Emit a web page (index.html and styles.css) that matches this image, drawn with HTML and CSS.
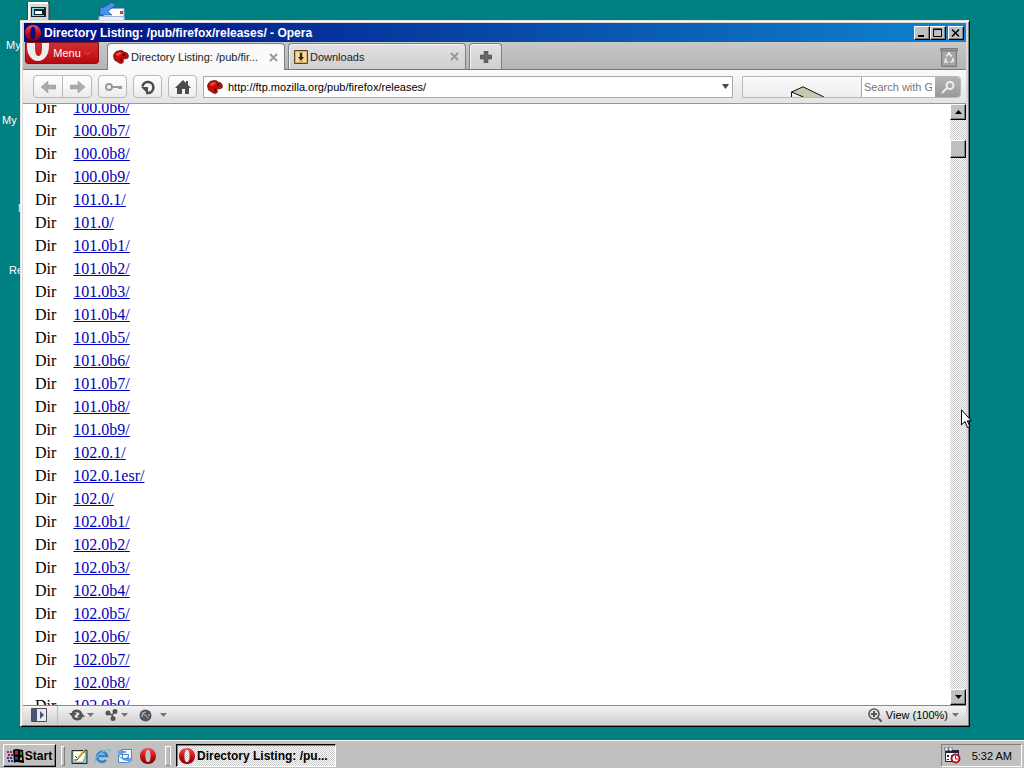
FILE: index.html
```html
<!DOCTYPE html>
<html lang="en">
<head>
    <meta charset="UTF-8">
    <meta name="viewport" content="width=device-width, initial-scale=1.0">
    <title>Directory Listing: /pub/firefox/releases/ - Opera</title>
    <link rel="stylesheet" href="styles.css">
</head>
<body>
    <!-- shared icons -->
    <svg class="defs" width="0" height="0">
        <defs>
            <linearGradient id="red" x1="0" y1="0" x2="0" y2="1">
                <stop offset="0" stop-color="#f0505a"/>
                <stop offset=".5" stop-color="#cc0f16"/>
                <stop offset="1" stop-color="#7c0004"/>
            </linearGradient>
            <symbol id="opera" viewBox="0 0 16 16">
                <path fill="url(#red)" fill-rule="evenodd" d="M8 0c4.600 0 8 3.400 8 8s-3.400 8-8 8-8-3.400-8-8 3.400-8 8-8zm0 1.800C6.200 1.800 5.400 4.500 5.400 8s.8 6.200 2.600 6.200 2.600-2.700 2.600-6.200S9.800 1.800 8 1.800z"/>
            </symbol>
            <symbol id="dino" viewBox="0 0 16 14">
                <path fill="#c00d0d" stroke="#5c0808" stroke-width=".7" d="M1 4l2-2.500L5 1 7 .4l2.500.4L11 2l3 1 1.500 2.500L15 8l-3 1-1-.5-1 1.500.5 2L9 13.500l-3-.5-2-1.500L1.500 10 1 8l-.5-2z"/>
                <path fill="#f04a40" d="M3 4l3-2 3 1-2 2-3 1z"/>
                <path fill="#300" d="M10 4h2v1.500h-2zM7 10l2-2v4z"/>
            </symbol>
        </defs>
    </svg>

    <main class="desktop">
        <svg class="shortcut computer" width="24" height="24" viewBox="0 0 24 24">
            <path fill="#d8d8d0" stroke="#333" d="M1 1.500h21V22H1z"/>
            <path fill="#fff" d="M1 1h20v2H3v18H1z"/>
            <path fill="#123" d="M4 6h15v10H4z"/>
            <path fill="#7fd0e0" d="M5 7h12v8H5z"/>
            <path fill="#123" d="M7 8h10v6H7z"/>
            <path fill="#fff" d="M8 10h7v3H8z"/>
        </svg>
        <svg class="shortcut mail" width="30" height="24" viewBox="0 0 30 24">
            <path fill="#fff" stroke="#8aa8d8" d="M9 6.500h18v14H4z"/>
            <path fill="#e4eefc" stroke="#9ab4dc" d="M2 14.500h25v9H2z"/>
            <path fill="#d04030" d="M23 9h3v3h-3z"/>
            <path fill="#4a90ec" stroke="#1a4ea8" stroke-width=".6" d="M14 .5l5 2-8 7 4 3.500H3V4l3 2z"/>
        </svg>
        <span class="label label-computer">My</span>
        <span class="label label-documents">My</span>
        <span class="label label-network">N</span>
        <span class="label label-recycle">Re</span>

        <section class="window">
            <header class="titlebar">
                <svg width="16" height="16"><use href="#opera"/></svg>
                <h1>Directory Listing: /pub/firefox/releases/ - Opera</h1>
                <div class="controls">
                    <button class="raised" type="button" aria-label="Minimize">
                        <svg width="12" height="10"><path d="M2 7h6v2H2z"/></svg>
                    </button>
                    <button class="raised" type="button" aria-label="Maximize">
                        <svg width="12" height="10"><path fill="none" stroke="#000" d="M1.500 1.500h8v7h-8zM1 1h9"/></svg>
                    </button>
                    <button class="raised close" type="button" aria-label="Close">
                        <svg width="12" height="10"><path fill="none" stroke="#000" stroke-width="1.600" d="M2 1.500l7 7M9 1.500l-7 7"/></svg>
                    </button>
                </div>
            </header>

            <nav class="tabs">
                <button class="menu" type="button">
                    <svg width="24" height="19" viewBox="0 0 24 19">
                        <path fill="#eee" fill-rule="evenodd" d="M1-6h22v9c0 9-5 15-11 15S1 12 1 3zM9-6v10c0 5 .8 9 3.500 9S16 9 16 4V-6z"/>
                    </svg>
                    Menu
                    <svg width="7" height="5"><path fill="none" stroke="#e05860" d="M.5.500l3 3 3-3"/></svg>
                </button>
                <div class="tab active">
                    <svg width="16" height="14"><use href="#dino"/></svg>
                    <a href="#">Directory Listing: /pub/fir...</a>
                    <button type="button" aria-label="Close tab">
                        <svg width="9" height="9"><path d="M1 1l7 7M8 1L1 8"/></svg>
                    </button>
                </div>
                <div class="tab">
                    <svg width="14" height="14">
                        <path fill="#d8b070" stroke="#5a4020" d="M.5.500h13v13H.5z"/>
                        <path fill="#f4dca0" d="M2 2h3v10H2zM9 2h3v10H9z"/>
                        <path fill="#3a2810" d="M6 3h2v4h2L7 10.500 4 7h2z"/>
                    </svg>
                    <a href="#">Downloads</a>
                    <button type="button" aria-label="Close tab">
                        <svg width="9" height="9"><path d="M1 1l7 7M8 1L1 8"/></svg>
                    </button>
                </div>
                <button class="tab new" type="button" aria-label="New tab">
                    <svg width="12" height="12"><path fill="#666" stroke="#444" stroke-width=".5" d="M4 0h4v4h4v4H8v4H4V8H0V4h4z"/></svg>
                </button>
                <button class="trash" type="button" aria-label="Closed tabs">
                    <svg width="18" height="19" viewBox="0 0 18 19">
                        <path fill="#999" stroke="#7b7b7b" d="M.5.500h17v2h-17zM1.500 2.500h15v16h-15z"/>
                        <path fill="#a6a6a6" d="M3 4h12v13H3z"/>
                        <path fill="none" stroke="#eee" stroke-width="1.600" d="M6.500 8.500L9 5l2.500 3.500M12.500 10l1 3-3 1M8 14H5l1-4"/>
                    </svg>
                </button>
            </nav>

            <form class="toolbar">
                <div class="pair">
                    <button type="button" aria-label="Back">
                        <svg width="15" height="12"><path fill="#aaa" stroke="#999" stroke-width=".5" d="M0 6l7-6v4h8v4H7v4z"/></svg>
                    </button>
                    <button type="button" aria-label="Forward">
                        <svg width="15" height="12"><path fill="#aaa" stroke="#999" stroke-width=".5" d="M15 6L8 0v4H0v4h8v4z"/></svg>
                    </button>
                </div>
                <button type="button" aria-label="Wand">
                    <svg width="18" height="10"><path fill="none" stroke="#999" stroke-width="2" d="M8 5a3 3 0 1 0-6 0 3 3 0 1 0 6 0h10"/><path stroke="#999" stroke-width="2" d="M14 6h4"/></svg>
                </button>
                <button type="button" aria-label="Reload">
                    <svg width="18" height="16">
                        <path fill="none" stroke="#4c4c4c" stroke-width="2.600" d="M3.500 7.500A5.500 5.500 0 1 1 9 14H7"/>
                        <path fill="#4c4c4c" d="M2 8h7v7z"/>
                    </svg>
                </button>
                <button type="button" aria-label="Home">
                    <svg width="16" height="14"><path fill="#4c4c4c" d="M8 0l3 3V1h2v4l3 3h-2v6h-4V9H7v5H2V8H0z"/></svg>
                </button>
                <label class="address">
                    <svg width="16" height="14"><use href="#dino"/></svg>
                    <input type="text" aria-label="Address" value="http://ftp.mozilla.org/pub/firefox/releases/">
                    <svg class="drop" width="7" height="5"><path fill="#444" d="M0 0h7L3.500 5z"/></svg>
                </label>
                <div class="search">
                    <svg class="throbber" width="34" height="12" viewBox="0 0 34 12">
                        <path fill="#c8c8b0" d="M1 7l11-5 21 10H10z"/>
                        <path fill="none" stroke="#111" d="M.5 12V7L12 1.800l21 10.200M.5 7l12 5"/>
                    </svg>
                    <input type="text" aria-label="Search" placeholder="Search with Google">
                    <button type="submit" aria-label="Search">
                        <svg width="16" height="14"><path fill="none" stroke="#eee" stroke-width="2" d="M7 8l-5 5M6.500 5.500a3.500 3.500 0 1 0 7 0 3.500 3.500 0 1 0-7 0"/></svg>
                    </button>
                </div>
            </form>

            <div class="view">
                <div class="page">
                    <table>
                        <tbody>
                            <tr><td>Dir</td><td><a href="#">100.0b6/</a></td></tr>
                            <tr><td>Dir</td><td><a href="#">100.0b7/</a></td></tr>
                            <tr><td>Dir</td><td><a href="#">100.0b8/</a></td></tr>
                            <tr><td>Dir</td><td><a href="#">100.0b9/</a></td></tr>
                            <tr><td>Dir</td><td><a href="#">101.0.1/</a></td></tr>
                            <tr><td>Dir</td><td><a href="#">101.0/</a></td></tr>
                            <tr><td>Dir</td><td><a href="#">101.0b1/</a></td></tr>
                            <tr><td>Dir</td><td><a href="#">101.0b2/</a></td></tr>
                            <tr><td>Dir</td><td><a href="#">101.0b3/</a></td></tr>
                            <tr><td>Dir</td><td><a href="#">101.0b4/</a></td></tr>
                            <tr><td>Dir</td><td><a href="#">101.0b5/</a></td></tr>
                            <tr><td>Dir</td><td><a href="#">101.0b6/</a></td></tr>
                            <tr><td>Dir</td><td><a href="#">101.0b7/</a></td></tr>
                            <tr><td>Dir</td><td><a href="#">101.0b8/</a></td></tr>
                            <tr><td>Dir</td><td><a href="#">101.0b9/</a></td></tr>
                            <tr><td>Dir</td><td><a href="#">102.0.1/</a></td></tr>
                            <tr><td>Dir</td><td><a href="#">102.0.1esr/</a></td></tr>
                            <tr><td>Dir</td><td><a href="#">102.0/</a></td></tr>
                            <tr><td>Dir</td><td><a href="#">102.0b1/</a></td></tr>
                            <tr><td>Dir</td><td><a href="#">102.0b2/</a></td></tr>
                            <tr><td>Dir</td><td><a href="#">102.0b3/</a></td></tr>
                            <tr><td>Dir</td><td><a href="#">102.0b4/</a></td></tr>
                            <tr><td>Dir</td><td><a href="#">102.0b5/</a></td></tr>
                            <tr><td>Dir</td><td><a href="#">102.0b6/</a></td></tr>
                            <tr><td>Dir</td><td><a href="#">102.0b7/</a></td></tr>
                            <tr><td>Dir</td><td><a href="#">102.0b8/</a></td></tr>
                            <tr><td>Dir</td><td><a href="#">102.0b9/</a></td></tr>
                        </tbody>
                    </table>
                </div>
                <div class="scrollbar">
                    <button class="raised" type="button" aria-label="Scroll up">
                        <svg width="7" height="4"><path d="M0 4h7L3.500 0z"/></svg>
                    </button>
                    <div class="track"><div class="thumb raised"></div></div>
                    <button class="raised" type="button" aria-label="Scroll down">
                        <svg width="7" height="4"><path d="M0 0h7L3.500 4z"/></svg>
                    </button>
                </div>
            </div>

            <footer class="status">
                <button class="panel" type="button" aria-label="Panels">
                    <svg width="16" height="14">
                        <path fill="#e8eaf0" stroke="#4a4f5c" d="M.5.500h15v13H.5z"/>
                        <path fill="#4a5570" d="M1 1h5v12H1zM9 3l4 4-4 4z"/>
                    </svg>
                </button>
                <button type="button" aria-label="Sync">
                    <svg width="16" height="12">
                        <path fill="none" stroke="#555" stroke-width="2.600" d="M4 5c0-4 6-4 8-1M12 7c0 4-6 4-8 1"/>
                        <path fill="#555" d="M0 4h8L4 9zM8 8h8l-4-5z"/>
                    </svg>
                    <svg class="drop" width="7" height="4"><path d="M0 0h7L3.500 4z"/></svg>
                </button>
                <button type="button" aria-label="Unite">
                    <svg width="14" height="12">
                        <circle cx="3" cy="4" r="2.500" fill="#555"/>
                        <circle cx="10" cy="2.500" r="2.500" fill="#555"/>
                        <circle cx="8" cy="9.500" r="2.500" fill="#555"/>
                        <path fill="none" stroke="#555" stroke-width="1.600" d="M3 4l4 2 1 3M7 6l3-3"/>
                    </svg>
                    <svg class="drop" width="7" height="4"><path d="M0 0h7L3.500 4z"/></svg>
                </button>
                <button class="turbo" type="button" aria-label="Turbo">
                    <svg width="13" height="13">
                        <circle cx="6.500" cy="6.500" r="6" fill="#50555e"/>
                        <path fill="none" stroke="#ccc" d="M3.500 4l6 5M3 8c0-3 1-5 4-5M10 5v2"/>
                    </svg>
                    <svg class="drop" width="7" height="4"><path d="M0 0h7L3.500 4z"/></svg>
                </button>
                <button class="zoom" type="button">
                    <svg width="14" height="14">
                        <circle cx="6" cy="6" r="5" fill="none" stroke="#555" stroke-width="1.600"/>
                        <path fill="none" stroke="#555" stroke-width="2" d="M3 6h6M6 3v6M10 10l4 4"/>
                    </svg>
                    View (100%)
                    <svg class="drop" width="7" height="4"><path d="M0 0h7L3.500 4z"/></svg>
                </button>
            </footer>
        </section>

        <svg class="cursor" width="12" height="20" viewBox="0 0 12 20">
            <path fill="#fff" stroke="#000" d="M.5.800v15l3.500-3.300 2.500 6 2.300-1-2.500-5.700h4z"/>
        </svg>
    </main>

    <footer class="taskbar">
        <button class="start raised" type="button">
            <svg width="17" height="16" viewBox="0 0 17 16">
                <path d="M6 2c4-2 7 0 10 0l1 13c-4 0-7-2-10 0z"/>
                <path fill="#d02030" d="M8 3c1.500-.8 2.500-.4 3 0v4c-1.500-.4-2-.6-3 0z"/>
                <path fill="#208040" d="M13 3.300c1 .2 1.500.2 2 0V7c-1 .3-1.500.2-2 0z"/>
                <path fill="#2040c0" d="M8 9c1.500-.6 2.500-.4 3 0v3c-1.500-.4-2-.6-3 0z"/>
                <path fill="#d8c020" d="M13 9.200c1 .3 1.500.3 2 0V12c-1 .3-1.500.2-2 0z"/>
                <path stroke="#a02050" stroke-width="2" stroke-dasharray="2 1" d="M0 4h6M1 7h6"/>
                <path stroke="#3030a0" stroke-width="2" stroke-dasharray="2 1" d="M0 10h6M1 13h6"/>
            </svg>
            Start
        </button>
        <div class="grip"></div>
        <div class="quick">
            <a href="#" aria-label="Show desktop">
                <svg width="17" height="16">
                    <path fill="#8fc8c8" stroke="#222" d="M1 2.500h15v13H1z"/>
                    <path fill="#fffff0" stroke="#555" stroke-width=".5" d="M2 3h10l3 3-3 8H2z"/>
                    <path fill="none" stroke="#333" d="M3 12h3l9-10.500M4 8l2 2"/>
                    <path stroke="#c8a830" stroke-width="1.600" d="M7 10l7-8.500"/>
                </svg>
            </a>
            <a href="#" aria-label="Internet Explorer">
                <svg width="17" height="16">
                    <path fill="none" stroke="#2488d0" stroke-width="2.600" d="M12 12a5 5 0 1 1 1-4H4"/>
                    <path fill="none" stroke="#70b8e8" stroke-width="1.300" d="M2 15c-3-2 1-9 8-12 4-2 7-2 6 1"/>
                </svg>
            </a>
            <a href="#" aria-label="Outlook Express">
                <svg width="17" height="16">
                    <path fill="#f4faff" stroke="#4c88c8" d="M5.500 1.500h9v9h-9zM1.500 6.500h10v8h-10z"/>
                    <path fill="none" stroke="#4c88c8" d="M2 8l5 4 5-4"/>
                    <path fill="#60a0e8" d="M0 4l5-3v2h4v2H5v2zM16 12l-5 3v-2H8v-2h3V9z"/>
                </svg>
            </a>
            <a href="#" aria-label="Opera"><svg width="16" height="16"><use href="#opera"/></svg></a>
        </div>
        <div class="grip double"></div>
        <button class="task" type="button">
            <svg width="16" height="16"><use href="#opera"/></svg>
            Directory Listing: /pu...
        </button>
        <div class="tray">
            <svg width="17" height="17">
                <path fill="#fff" stroke="#223" d="M1.500 3.500h13v11h-13z"/>
                <path fill="#224" d="M1 3h14v3H1zM3 8h2v2H3zM7 8h2v2H7zM3 12h2v1H3z"/>
                <path fill="#fff" stroke="#224" stroke-width=".6" d="M1 0h3v4H1zM5 0h3v4H5z"/>
                <circle cx="11.500" cy="11.500" r="4" fill="#fff" stroke="#b01020" stroke-width="2"/>
                <path fill="none" stroke="#b01020" d="M11.500 9v3H14"/>
            </svg>
            <time>5:32 AM</time>
        </div>
    </footer>
</body>
</html>
```
FILE: styles.css
```css
:root {
    --teal: #008080;
    --face: #c0c0c0;
    --ui: 11px "Liberation Sans", Arial, sans-serif;
    --checker: repeating-conic-gradient(#fff 0 25%, #c8c8c8 0 50%) 0 0 / 2px 2px;
}

* {
    box-sizing: border-box;
}

body {
    margin: 0;
    height: 100vh;
    display: flex;
    flex-direction: column;
    overflow: hidden;
    background: var(--teal);
    font: var(--ui);
    color: #000;
}

svg {
    display: block;
    flex: none;
}

button {
    display: flex;
    align-items: center;
    justify-content: center;
    margin: 0;
    padding: 0;
    border: 0;
    background: none;
    font: inherit;
    color: inherit;
}

input {
    min-width: 0;
    padding: 0;
    border: 0;
    outline: 0;
    background: none;
    font: inherit;
    color: inherit;
}

.defs {
    position: absolute;
}

.raised {
    background: var(--face);
    border: 1px solid;
    border-color: #fff #000 #000 #fff;
    box-shadow: inset -1px -1px #808080;
}

/* desktop */
.desktop {
    position: relative;
    flex: 1;
    min-height: 0;
}

.shortcut,
.label {
    position: absolute;
}

.computer {
    left: 27px;
    top: 1px;
}

.mail {
    left: 97px;
    top: 2px;
}

.label {
    color: #fff;
    line-height: 14px;
}

.label-computer {
    left: 6px;
    top: 38px;
}

.label-documents {
    left: 2px;
    top: 113px;
}

.label-network {
    left: 18px;
    top: 201px;
}

.label-recycle {
    left: 9px;
    top: 263px;
}

/* browser window */
.window {
    position: absolute;
    inset: 20px 54px 13px 20px;
    display: flex;
    flex-direction: column;
    padding: 2px 3px 2px 2px;
    background: #d8d8d8;
    border: 1px solid;
    border-color: #dfdfdf #000 #000 #dfdfdf;
    box-shadow: inset 1px 1px #fff, inset -1px -1px #808080;
}

.titlebar {
    display: flex;
    align-items: center;
    gap: 3px;
    height: 19px;
    flex: none;
    margin-left: 1px;
    padding: 0 2px 0 1px;
    background: linear-gradient(to right, #000c84, #0848a8 50%, #1084d0);
    color: #fff;
}

.titlebar h1 {
    flex: 1;
    margin: 0;
    font-size: 12px;
}

.controls {
    display: flex;
}

.controls button {
    width: 16px;
    height: 14px;
}

.controls .close {
    margin-left: 2px;
}

.tabs {
    display: flex;
    align-items: stretch;
    height: 28px;
    flex: none;
    padding-left: 2px;
    background: linear-gradient(#c8c8c8, #b4b4b4);
    border-bottom: 1px solid #777;
}

.menu {
    align-self: flex-start;
    width: 74px;
    height: 22px;
    margin-right: 8px;
    padding-right: 7px;
    justify-content: space-between;
    background: linear-gradient(#c63238, #cf1a20 50%, #b40a10);
    border: 1px solid #8c1216;
    border-radius: 0 0 3px 3px;
    color: #fff;
}

.menu svg:first-child {
    align-self: flex-start;
}

.tab {
    display: flex;
    align-items: center;
    gap: 2px;
    width: 178px;
    margin: 1px 3px 0 0;
    padding: 0 6px 0 5px;
    background: linear-gradient(#e2e2e2, #cfcfcf);
    border: 1px solid #808080;
    border-bottom: 0;
    border-radius: 4px 4px 0 0;
    box-shadow: inset 1px 1px #f4f4f4;
}

.tab a {
    flex: 1;
    color: #222;
    text-decoration: none;
    white-space: nowrap;
}

.tab button path {
    fill: none;
    stroke: #999;
    stroke-width: 2;
}

.tab.active {
    margin-bottom: -1px;
    background: #fafafa;
}

.tab.new {
    width: 33px;
    padding: 0;
}

.trash {
    margin: 0 8px 0 auto;
    padding-top: 4px;
}

.toolbar {
    display: flex;
    align-items: center;
    gap: 6px;
    height: 34px;
    flex: none;
    margin: 0;
    padding: 0 5px 0 10px;
    background: linear-gradient(#fafafa, #e4e4e4);
    border-bottom: 1px solid #999;
}

.toolbar > button,
.pair {
    width: 29px;
    height: 23px;
    border: 1px solid #b8b8b8;
    border-radius: 4px;
    background: linear-gradient(#fff, #ececec);
}

.pair {
    display: flex;
    width: 59px;
}

.pair button {
    flex: 1;
}

.pair button + button {
    border-left: 1px solid #b8b8b8;
}

.address {
    display: flex;
    align-items: center;
    gap: 5px;
    flex: 1;
    height: 22px;
    padding: 0 3px;
    background: #fff;
    border: 1px solid #aaa;
}

.address input {
    flex: 1;
}

.search {
    display: flex;
    justify-content: flex-end;
    width: 219px;
    height: 22px;
    margin-left: 3px;
    border: 1px solid #b8b8b8;
    border-radius: 0 4px 4px 0;
    background: linear-gradient(#fafafa, #eee);
}

.throbber {
    align-self: flex-end;
    margin-right: 36px;
}

.search input {
    width: 74px;
    padding: 0 3px 0 2px;
    background: #fff;
    border-left: 1px solid #aaa;
}

.search input::placeholder {
    color: #777;
}

.search button {
    width: 25px;
    background: linear-gradient(#b4b4b4, #999);
    border-radius: 0 3px 3px 0;
}

/* page and scrollbar */
.view {
    display: flex;
    flex: 1;
    min-height: 0;
    background: #fff;
}

.page {
    flex: 1;
    overflow: hidden;
    padding-left: 12px;
}

.page table {
    margin-top: -8px;
    border-collapse: collapse;
    font: 16px/23px "Liberation Serif", "Times New Roman", serif;
}

.page td {
    padding: 0 17px 0 0;
}

.page a {
    color: #0000c0;
}

.scrollbar {
    display: flex;
    flex-direction: column;
    width: 16px;
}

.scrollbar button {
    height: 16px;
    flex: none;
}

.track {
    flex: 1;
    padding-top: 20px;
    background: var(--checker);
}

.thumb {
    height: 18px;
}

.status {
    display: flex;
    align-items: center;
    height: 19px;
    flex: none;
    padding: 0 7px;
    background: linear-gradient(#f4f4f4, #d0d0d0);
    border-top: 1px solid #888;
}

.status button {
    gap: 2px;
    margin-right: 11px;
}

.status .drop {
    fill: #777;
}

.status .panel {
    width: 28px;
    height: 18px;
    padding-right: 10px;
    border-right: 1px solid #bbb;
}

.status .turbo {
    gap: 8px;
}

.status .zoom {
    gap: 4px;
    margin: 0 0 0 auto;
}

.cursor {
    position: absolute;
    left: 961px;
    top: 409px;
}

/* taskbar */
.taskbar {
    display: flex;
    align-items: center;
    gap: 5px;
    height: 28px;
    flex: none;
    padding: 2px 2px 0 3px;
    background: var(--face);
    border-top: 1px solid #fff;
}

.start {
    gap: 1px;
    width: 53px;
    height: 23px;
    font-size: 12px;
    font-weight: bold;
}

.grip {
    width: 4px;
    height: 20px;
    border: 1px solid;
    border-color: #fff #808080 #808080 #fff;
}

.grip.double {
    border-right: 2px groove #fff;
    width: 6px;
}

.quick {
    display: flex;
    gap: 6px;
    padding: 0 4px 0 1px;
}

.task {
    justify-content: flex-start;
    gap: 2px;
    width: 160px;
    height: 23px;
    padding: 0 2px;
    background: var(--checker);
    border: 1px solid;
    border-color: #000 #fff #fff #000;
    box-shadow: inset 1px 1px #808080;
    font-size: 12px;
    font-weight: bold;
    white-space: nowrap;
}

.tray {
    display: flex;
    align-items: center;
    justify-content: space-between;
    width: 81px;
    height: 23px;
    margin-left: auto;
    padding: 0 9px 0 2px;
    border: 1px solid;
    border-color: #808080 #fff #fff #808080;
}
```
